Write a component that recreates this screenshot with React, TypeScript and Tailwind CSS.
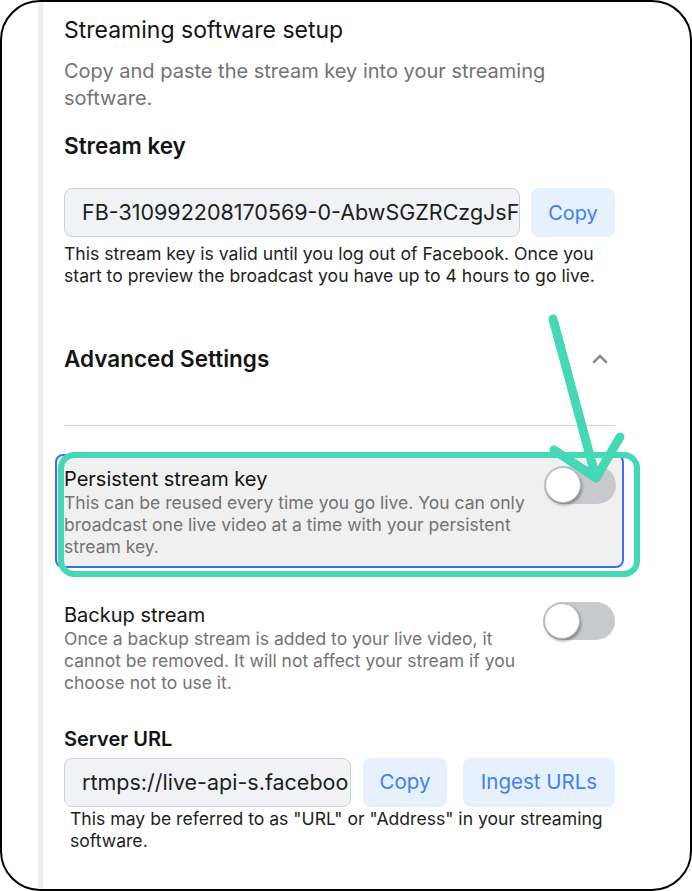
import React from "react";

const font = { fontFamily: 'Inter, "Liberation Sans", Arial, sans-serif' };

const Toggle = () => (
  <div className="relative h-[38px] w-[72px] shrink-0 rounded-full bg-[#c8c9cc]">
    <div className="absolute left-[1px] top-[1px] h-[36px] w-[36px] rounded-full border border-[#b5b6b9] bg-white shadow-[1px_2px_3px_rgba(0,0,0,0.35)]" />
  </div>
);

const SettingRow = ({ title, desc, boxed }: { title: string; desc: string; boxed?: boolean }) => (
  <div
    className={
      boxed
        ? "-mx-[9px] flex items-start justify-between rounded-lg border-2 border-[#3d6ef2] bg-[#f0f0f0] px-[7px] pb-[8px] pt-[10px] pr-[6px]"
        : "flex items-start justify-between"
    }
  >
    <div className="w-[470px]">
      <div className="text-[20px] leading-[26px] text-[#141414]">{title}</div>
      <div className="text-[17.5px] leading-[22px] text-[#737373]">{desc}</div>
    </div>
    <Toggle />
  </div>
);

export default function App() {
  return (
    <div style={font} className="relative h-[891px] w-[692px] overflow-hidden rounded-[40px] border-2 border-black bg-white">
      <div className="ml-[36px] h-full border-l-[5px] border-[#eceef1] pl-[21px] pr-[75px] pt-[14px]">
        <h1 className="text-[23px] leading-[28px] text-[#141414]">Streaming software setup</h1>
        <p className="mt-[14px] text-[20px] leading-[27px] text-[#737373]">
          Copy and paste the stream key into your streaming software.
        </p>

        <h2 className="mt-[20px] text-[22.5px] font-semibold leading-[28px] text-[#141414]">Stream key</h2>
        <div className="mt-[28px] flex gap-[11px]">
          <div className="flex h-[49px] w-[456px] items-center overflow-hidden whitespace-nowrap rounded-lg border border-[#ccd0d5] bg-[#f0f2f5] pl-[17px] text-[21.5px] text-[#1c1e21]">
            FB-310992208170569-0-AbwSGZRCzgJsF
          </div>
          <button className="h-[49px] w-[84px] rounded-lg bg-[#e7f1fd] text-[20px] text-[#3f7ff0]">Copy</button>
        </div>
        <p className="mt-[6px] text-[17.6px] leading-[22px] text-[#1c1e21]">
          This stream key is valid until you log out of Facebook. Once you start to preview the broadcast you have up to 4 hours to go live.
        </p>

        <div className="mt-[58px] flex items-center justify-between">
          <h2 className="text-[22.5px] font-semibold leading-[28px] text-[#141414]">Advanced Settings</h2>
          <svg width="18" height="12" viewBox="0 0 18 12" className="mr-[6px]">
            <path d="M3 9 L9 3 L15 9" fill="none" stroke="#8a8d91" strokeWidth="2.6" strokeLinecap="round" strokeLinejoin="round" />
          </svg>
        </div>
        <div className="mt-[52px] h-px bg-[#d0d2d5]" />

        <div className="mt-[28px]">
          <SettingRow
            boxed
            title="Persistent stream key"
            desc="This can be reused every time you go live. You can only broadcast one live video at a time with your persistent stream key."
          />
        </div>
        <div className="mt-[34px]">
          <SettingRow
            title="Backup stream"
            desc="Once a backup stream is added to your live video, it cannot be removed. It will not affect your stream if you choose not to use it."
          />
        </div>

        <h3 className="mt-[32px] text-[20px] font-semibold leading-[26px] text-[#141414]">Server URL</h3>
        <div className="mt-[6px] flex gap-[12px]">
          <div className="flex h-[49px] w-[287px] shrink-0 items-center overflow-hidden whitespace-nowrap rounded-lg border border-[#ccd0d5] bg-[#f0f2f5] pl-[17px] text-[21.5px] text-[#1c1e21]">
            rtmps://live-api-s.faceboo
          </div>
          <button className="h-[49px] w-[84px] shrink-0 rounded-lg bg-[#e7f1fd] text-[20.5px] text-[#3f7ff0]">Copy</button>
          <button className="ml-[4px] h-[49px] w-[152px] shrink-0 rounded-lg bg-[#e7f1fd] text-[20.5px] text-[#3f7ff0]">Ingest URLs</button>
        </div>
        <p className="mt-[1px] pl-[6px] text-[17.6px] leading-[22px] text-[#1c1e21]">
          This may be referred to as "URL" or "Address" in your streaming software.
        </p>
      </div>

      {/* annotation overlay */}
      <div className="pointer-events-none absolute left-[56px] top-[450px] h-[125px] w-[582px] rounded-[16px] border-[6px] border-[#45d8b6]" />
      <svg className="pointer-events-none absolute left-0 top-0" width="692" height="891">
        <g stroke="#45d8b6" strokeWidth="9" strokeLinecap="round" fill="none">
          <path d="M551 317 L594 476" />
          <path d="M618 435 L594 476 L552 448" strokeLinejoin="round" />
        </g>
      </svg>
    </div>
  );
}
